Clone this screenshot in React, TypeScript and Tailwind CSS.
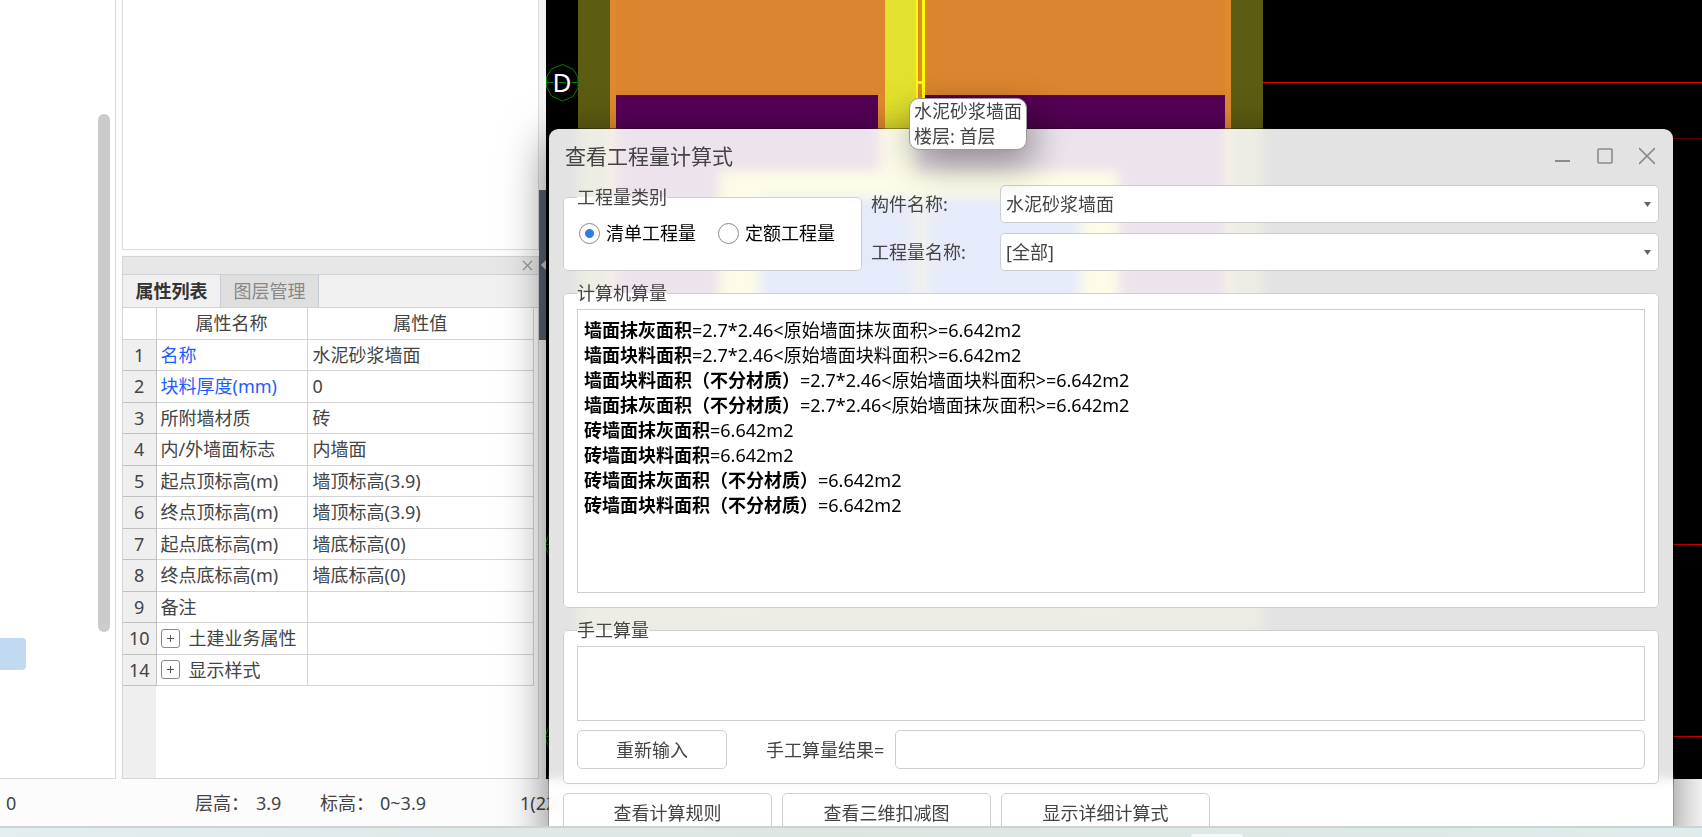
import { ReactNode, useState } from "react";
import { twMerge } from "tailwind-merge";

type Property = {
  no: number;
  name: string;
  value?: string;
  link?: boolean;
  group?: boolean;
};

const properties: Property[] = [
  { no: 1, name: "名称", value: "水泥砂浆墙面", link: true },
  { no: 2, name: "块料厚度(mm)", value: "0", link: true },
  { no: 3, name: "所附墙材质", value: "砖" },
  { no: 4, name: "内/外墙面标志", value: "内墙面" },
  { no: 5, name: "起点顶标高(m)", value: "墙顶标高(3.9)" },
  { no: 6, name: "终点顶标高(m)", value: "墙顶标高(3.9)" },
  { no: 7, name: "起点底标高(m)", value: "墙底标高(0)" },
  { no: 8, name: "终点底标高(m)", value: "墙底标高(0)" },
  { no: 9, name: "备注" },
  { no: 10, name: "土建业务属性", group: true },
  { no: 14, name: "显示样式", group: true },
];

const formulas = [
  ["墙面抹灰面积", "=2.7*2.46<原始墙面抹灰面积>=6.642m2"],
  ["墙面块料面积", "=2.7*2.46<原始墙面块料面积>=6.642m2"],
  ["墙面块料面积（不分材质）", "=2.7*2.46<原始墙面块料面积>=6.642m2"],
  ["墙面抹灰面积（不分材质）", "=2.7*2.46<原始墙面抹灰面积>=6.642m2"],
  ["砖墙面抹灰面积", "=6.642m2"],
  ["砖墙面块料面积", "=6.642m2"],
  ["砖墙面抹灰面积（不分材质）", "=6.642m2"],
  ["砖墙面块料面积（不分材质）", "=6.642m2"],
];

function PropertyTable() {
  return (
    <table className="w-[411px] table-fixed border-collapse bg-white text-[#444]">
      <colgroup>
        <col className="w-[33px]" />
        <col className="w-[151px]" />
        <col />
      </colgroup>
      <thead>
        <tr className="h-[31px] border-b border-[#d4d4d4]">
          <th className="border-r border-[#d4d4d4]" />
          <th className="border-r border-[#d4d4d4] p-0 font-normal">属性名称</th>
          <th className="border-r border-[#d4d4d4] p-0 font-normal">属性值</th>
        </tr>
      </thead>
      <tbody>
        {properties.map((p) => (
          <tr key={p.no} className="border-b border-[#d4d4d4] odd:h-[31px] even:h-8">
            <td className="border-r border-b border-[#c0c0c0] bg-[#efefef] p-0 text-center">
              {p.no}
            </td>
            <td
              className={twMerge(
                "border-r border-[#d4d4d4] p-0 pl-1 whitespace-nowrap",
                p.link && "text-[#1f5cff]",
              )}
            >
              {p.group ? (
                <span className="flex items-center gap-[9px]">
                  <button
                    aria-label={p.name}
                    className="flex size-[19px] items-center justify-center rounded-[3px] border border-[#888] bg-white"
                  >
                    <svg width="9" height="9" viewBox="0 0 9 9" stroke="#555">
                      <path d="M1 4.5h7M4.5 1v7" />
                    </svg>
                  </button>
                  {p.name}
                </span>
              ) : (
                p.name
              )}
            </td>
            <td className="border-r border-[#d4d4d4] p-0 pl-[5px]">{p.value}</td>
          </tr>
        ))}
      </tbody>
    </table>
  );
}

function PropertyPanel() {
  return (
    <section className="flex min-h-0 flex-1 flex-col border border-[#d4d4d4] bg-white">
      <div className="flex h-[17px] shrink-0 items-center justify-end bg-[#e7e7e7] pr-[5px]">
        <button aria-label="关闭">
          <svg width="11" height="11" viewBox="0 0 11 11" stroke="#999" strokeWidth="1.3">
            <path d="M1 1l9 9M10 1l-9 9" />
          </svg>
        </button>
      </div>
      <div className="flex h-[34px] shrink-0 border-y border-[#d0d2d6] bg-[#f1f1f1]">
        <button className="w-[98px] border-r border-[#c9ccd4] bg-[#f0f0f0] font-bold text-[#333]">
          属性列表
        </button>
        <button className="w-[98px] border-r border-[#c9ccd4] bg-[#dfdfdf] text-[#888]">
          图层管理
        </button>
      </div>
      <PropertyTable />
      <div className="w-[33px] flex-1 bg-[#efefef]" />
    </section>
  );
}

function Drawing() {
  return (
    <svg className="size-full bg-black" aria-hidden="true">
      <g transform="translate(-546 0)">
        <rect x="578" y="0" width="685" height="634" fill="#5c5c12" />
        <rect x="610" y="0" width="621" height="600" fill="#e08a2e" />
        <rect x="616" y="0" width="609" height="95" fill="#db852f" />
        <rect x="616" y="95" width="609" height="505" fill="#560056" />
        <rect x="719" y="171" width="400" height="429" fill="#e2e22e" />
        <rect x="760" y="198" width="320" height="402" fill="#2048d8" />
        <rect x="878" y="94" width="7" height="77" fill="#e08a2e" />
        <rect x="885" y="0" width="32" height="171" fill="#e2e22e" />
        <rect x="912" y="198" width="18" height="402" fill="#708070" />
        <rect x="916" y="0" width="9" height="128" fill="#ffff00" />
        <rect x="918" y="0" width="4" height="81" fill="#e08a2e" />
        <rect x="918" y="84" width="4" height="44" fill="#e08a2e" />
        <g stroke="#e00000">
          <path d="M1263 82.5H3000M1300 544.5H3000M1300 736.5H3000" />
          <path d="M1300 138.5H3000" stroke="#600000" />
        </g>
        <g stroke="#008000" fill="none">
          <path d="M562.5 64.5l11 5 4.5 8v10l-5 9-10.500 4.500-11-5-5-9v-10l5-8zM546 82.500h32" />
          <path d="M562 527l-13 7-4 11 4 11 13 7M546 544.500h10M562 719l-13 7-4 11 4 11 13 7M546 736.500h10" />
        </g>
        <text
          x="562"
          y="92"
          fill="#fff"
          fontSize="26"
          textAnchor="middle"
          stroke="#000"
          strokeWidth="3"
          paintOrder="stroke"
        >
          D
        </text>
      </g>
    </svg>
  );
}

function Group({
  title,
  className = "",
  children,
}: {
  title: string;
  className?: string;
  children: ReactNode;
}) {
  return (
    <fieldset
      className={twMerge("min-w-0 rounded-[5px] border border-[#cecece] bg-white px-[13px]", className)}
    >
      <legend className="h-6 leading-6">{title}</legend>
      {children}
    </fieldset>
  );
}

function Radio({
  label,
  checked,
  onChange,
}: {
  label: string;
  checked: boolean;
  onChange: () => void;
}) {
  return (
    <label className="flex items-center gap-[6px] whitespace-nowrap text-black">
      <input
        type="radio"
        name="kind"
        checked={checked}
        onChange={onChange}
        className="size-[21px] appearance-none rounded-full border border-[#888] bg-white checked:bg-[radial-gradient(circle,#2a7fe6_4px,#fff_5px)]"
      />
      {label}
    </label>
  );
}

function Picker({ id, label, value }: { id: string; label: string; value: string }) {
  return (
    <>
      <label htmlFor={id}>{label}</label>
      <div className="relative">
        <select
          id={id}
          className="h-[38px] w-full appearance-none rounded-[5px] border border-[#cecece] bg-white px-[5px]"
        >
          <option>{value}</option>
        </select>
        <svg
          className="pointer-events-none absolute top-[17px] right-2"
          width="7"
          height="5"
          viewBox="0 0 7 5"
          fill="#5a6578"
        >
          <path d="M0 0h7L3.5 5z" />
        </svg>
      </div>
    </>
  );
}

function FormulaDialog() {
  const [kind, setKind] = useState(0);
  const buttonStyle = "rounded-[5px] border border-[#cecece] bg-white";
  return (
    <div
      role="dialog"
      aria-labelledby="dialog-title"
      className="absolute top-[128px] right-7 left-[548px] rounded-[10px] border border-black/40 bg-white/89 bg-clip-padding pr-[14px] pb-4 pl-[14px] shadow-[0_12px_45px_rgba(0,0,0,0.5)] backdrop-blur-[6px]"
    >
      <header className="flex h-14 items-center justify-between pr-1 pb-[2px] pl-[2px]">
        <h1 id="dialog-title" className="text-[21px] leading-7">
          查看工程量计算式
        </h1>
        <div className="flex gap-[26px]">
          <button aria-label="最小化">
            <svg width="16" height="18" fill="none" stroke="#8b8b8b" strokeWidth="2">
              <path d="M0 14h15" />
            </svg>
          </button>
          <button aria-label="最大化">
            <svg width="16" height="18" fill="none" stroke="#8b8b8b" strokeWidth="1.6">
              <rect x="1" y="2" width="14" height="14" rx="1" />
            </svg>
          </button>
          <button aria-label="关闭">
            <svg width="16" height="18" fill="none" stroke="#8b8b8b" strokeWidth="1.6">
              <path d="M0 1l16 16M16 1L0 17" />
            </svg>
          </button>
        </div>
      </header>

      <div className="flex gap-[9px]">
        <Group title="工程量类别" className="h-[86px] w-[299px] shrink-0">
          <div className="flex gap-[22px] pt-3 pl-[2px]">
            <Radio label="清单工程量" checked={kind === 0} onChange={() => setKind(0)} />
            <Radio label="定额工程量" checked={kind === 1} onChange={() => setKind(1)} />
          </div>
        </Group>
        <div className="grid flex-1 grid-cols-[129px_1fr] content-start items-center gap-y-[10px]">
          <Picker id="component" label="构件名称:" value="水泥砂浆墙面" />
          <Picker id="quantity" label="工程量名称:" value="[全部]" />
        </div>
      </div>

      <Group title="计算机算量" className="mt-[10px] pb-[14px]">
        <div className="mt-1 h-[284px] border border-[#cecece] px-[6px] py-2 text-black">
          {formulas.map(([name, formula]) => (
            <p key={name} className="leading-[25px]">
              <b>{name}</b>
              {formula}
            </p>
          ))}
        </div>
      </Group>

      <Group title="手工算量" className="mt-[10px] pb-[14px]">
        <textarea
          aria-label="手工算量"
          className="mt-1 block h-[75px] w-full resize-none border border-[#cecece] bg-white p-2"
        />
        <div className="mt-[9px] flex h-[39px] items-center">
          <button className={twMerge(buttonStyle, "h-full w-[150px]")}>重新输入</button>
          <label htmlFor="result" className="w-[168px] shrink-0 pl-[39px] whitespace-nowrap">
            手工算量结果=
          </label>
          <input id="result" className={twMerge(buttonStyle, "h-full min-w-0 flex-1 px-2")} />
        </div>
      </Group>

      <footer className="mt-[9px] flex h-10 gap-[10px]">
        {["查看计算规则", "查看三维扣减图", "显示详细计算式"].map((text) => (
          <button key={text} className={twMerge(buttonStyle, "w-[209px]")}>
            {text}
          </button>
        ))}
      </footer>
    </div>
  );
}

export default function App() {
  return (
    <div className="flex h-screen flex-col overflow-hidden bg-[#fcfcfc] font-['Noto_Sans','Noto_Sans_CJK_SC',sans-serif] text-[18px] leading-6 text-[#444]">
      <div className="relative flex min-h-0 flex-1 flex-col overflow-hidden">
        <main className="flex min-h-0 flex-1">
          <aside className="relative w-[116px] shrink-0 border-r border-b border-[#d8d8d8] bg-white">
            <div className="absolute top-[114px] right-[5px] h-[518px] w-3 rounded-full bg-[#cbcbcb]" />
            <div className="absolute top-[638px] left-0 h-8 w-[26px] rounded-r-[4px] bg-[#c2d9f2]" />
          </aside>
          <div className="ml-[6px] flex w-[417px] shrink-0 flex-col gap-[6px]">
            <div className="h-[250px] shrink-0 border border-t-0 border-[#dcdcdc] bg-white" />
            <PropertyPanel />
          </div>
          <div className="w-[7px] shrink-0 bg-[#f4f4f4] pt-[190px]">
            <button
              aria-label="收起"
              className="flex h-[150px] w-full items-center justify-end bg-[#56606e]"
            >
              <svg width="5" height="10" viewBox="0 0 5 10" fill="#c4c8ce">
                <path d="M5 0v10L0 5z" />
              </svg>
            </button>
          </div>
          <div className="min-w-0 flex-1">
            <Drawing />
          </div>
        </main>
        <div className="flex h-[47px] shrink-0 items-center pl-[6px] whitespace-nowrap">
          <span className="w-[189px]">0</span>
          <span className="w-[61px]">层高：</span>
          <span className="w-16">3.9</span>
          <span className="w-[60px]">标高：</span>
          <span className="w-[140px]">0~3.9</span>
          <span>1(22)</span>
        </div>

        <FormulaDialog />

        <div className="absolute top-[98px] left-[909px] rounded-[10px] border border-[#999] bg-white px-1 leading-[25px] shadow-[6px_14px_36px_rgba(0,0,0,0.4)]">
          <p>水泥砂浆墙面</p>
          <p>楼层: 首层</p>
        </div>
      </div>
      <div className="flex h-[11px] shrink-0 items-end border-t-2 border-[#cdd3d3] bg-linear-to-r from-[#e3eef1] via-[#dde5e1] to-[#deeceb]">
        <div className="ml-[70%] h-[3px] w-[52px] rounded-t-[4px] bg-[#f2f7f7]" />
      </div>
    </div>
  );
}
